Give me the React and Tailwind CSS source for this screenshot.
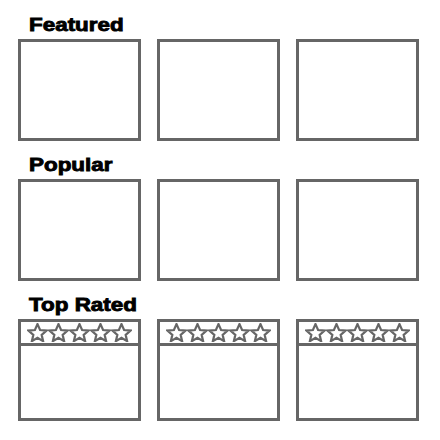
const Star = () => (
    <svg viewBox="1 1.2 22 20.6" className="w-[21px] h-[19px] shrink-0" aria-hidden>
        <polygon
            points="12,2.4 14.8,8.8 21.8,9.4 16.5,14 18.1,20.9 12,17.3 5.9,20.9 7.5,14 2.2,9.4 9.2,8.8"
            fill="none"
            stroke="#666666"
            strokeWidth="2.4"
            strokeLinejoin="miter"
        />
    </svg>
);

const Box = ({ rated }) => (
    <div className="h-[102px] border-[3px] border-[#666666] bg-white flex flex-col">
        {rated && (
            <div className="h-[24px] border-b-[3px] border-[#666666] flex items-center pl-[6px]">
                <Star />
                <Star />
                <Star />
                <Star />
                <Star />
            </div>
        )}
    </div>
);

const Section = ({ title, rated }) => (
    <section className="flex flex-col">
        <h2 className="h-[20px] leading-[20px] pl-[11px] mb-1 text-[19px] font-bold text-black font-['Liberation_Sans',Arial,sans-serif]">
            <span className="inline-block origin-left scale-x-[1.18] [-webkit-text-stroke:0.9px_#000]">
                {title}
            </span>
        </h2>
        <div className="grid grid-cols-3 gap-4">
            <Box rated={rated} />
            <Box rated={rated} />
            <Box rated={rated} />
        </div>
    </section>
);

export default function App() {
    return (
        <div className="w-[440px] h-[440px] bg-white pt-[15px] pl-[18px]">
            <div className="w-[401px] flex flex-col gap-[14px]">
                <Section title="Featured" />
                <Section title="Popular" />
                <Section title="Top Rated" rated />
            </div>
        </div>
    );
}
